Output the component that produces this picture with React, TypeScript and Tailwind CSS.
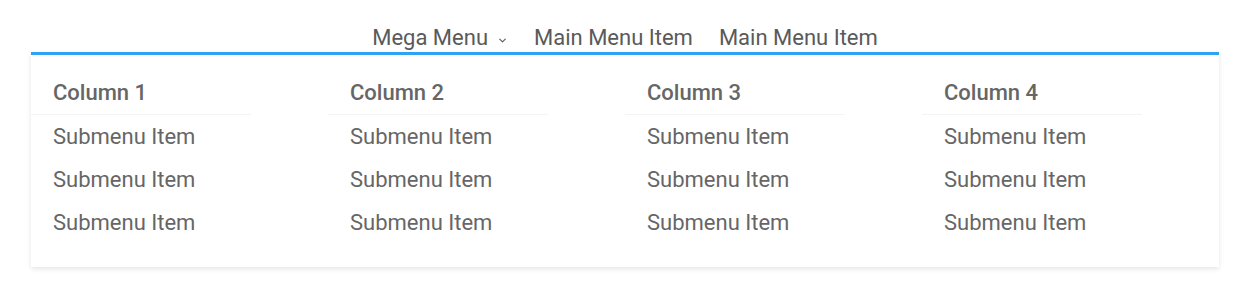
import React from 'react';
import { ChevronDown } from 'lucide-react';

const columns = ['Column 1', 'Column 2', 'Column 3', 'Column 4'];
const items = ['Submenu Item', 'Submenu Item', 'Submenu Item'];

const App: React.FC = () => {
  return (
    <div className="min-h-[300px] bg-white" style={{ fontFamily: 'Roboto, "Open Sans", sans-serif' }}>
      <div className="ml-[31px] w-[1188px]">
        <nav className="flex justify-center pt-[24px] text-[22px] leading-[28px] text-[#5a5a5a]">
          <a className="flex items-center px-[13px]">
            Mega Menu
            <ChevronDown size={11} strokeWidth={2.5} className="ml-[9px] mt-[4px]" />
          </a>
          <a className="px-[13px]">Main Menu Item</a>
          <a className="px-[13px]">Main Menu Item</a>
        </nav>
        <div className="border-t-[3px] border-[#2ea3f2] bg-white pt-[24px] pb-[23px] shadow-[0_2px_5px_rgba(0,0,0,0.1)]">
          <div className="grid grid-cols-4">
            {columns.map((col) => (
              <div key={col}>
                <div className="w-[220px] border-b border-[#f4f4f4] pb-[7px] pl-[22px] text-[22px] font-medium leading-[28px] text-[#666]">
                  {col}
                </div>
                <ul>
                  {items.map((item, i) => (
                    <li key={i} className="pl-[22px] text-[22px] leading-[43px] text-[#666]">
                      {item}
                    </li>
                  ))}
                </ul>
              </div>
            ))}
          </div>
        </div>
      </div>
    </div>
  );
};

export default App;
